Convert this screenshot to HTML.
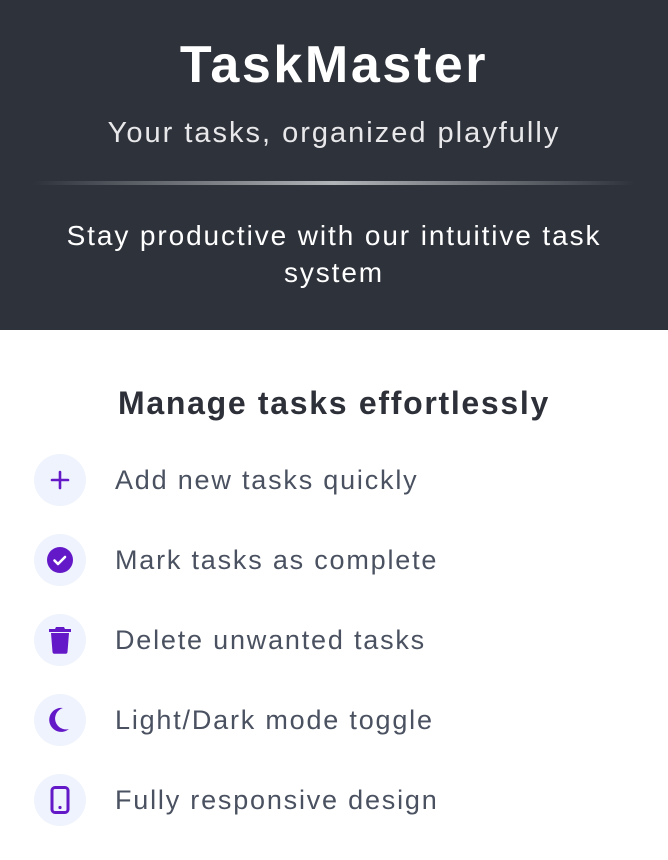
<!DOCTYPE html><html><head><style>
body{margin:0;width:668px;height:860px;overflow:hidden;background:#fff;font-family:"Liberation Sans",sans-serif}
header{background:#2e323b;height:330px;color:#fff;text-align:center;position:relative}
h1{margin:0;position:absolute;top:35px;width:100%;font-size:52px;font-weight:bold;letter-spacing:2.6px}
.sub{position:absolute;top:117px;width:100%;font-size:29px;letter-spacing:2px;color:#e8e8ea}
.line{position:absolute;top:181px;left:33px;width:602px;height:4px;background:linear-gradient(90deg,rgba(255,255,255,0),rgba(200,204,206,.85),rgba(255,255,255,0))}
.tag{position:absolute;top:217px;left:40px;right:40px;font-size:28px;line-height:37px;letter-spacing:1.9px}
h2{position:absolute;top:385px;width:100%;margin:0;text-align:center;font-size:32px;letter-spacing:1.7px;color:#2d3038}
.row{position:absolute;left:34px;height:52px;display:flex;align-items:center}
.ic{width:52px;height:52px;border-radius:50%;background:#eff3fd;display:flex;align-items:center;justify-content:center}
.row span{margin-left:29px;font-size:27px;letter-spacing:1.8px;color:#4a5160}
</style></head><body>
<header><h1>TaskMaster</h1><div class="sub">Your tasks, organized playfully</div><div class="line"></div>
<div class="tag">Stay productive with our intuitive task system</div></header>
<h2>Manage tasks effortlessly</h2>
<div class="row" style="top:454px"><div class="ic"><svg width="24" height="24" viewBox="0 0 24 24"><path d="M12 4v16M4 12h16" stroke="#6419c8" stroke-width="2.6" stroke-linecap="round"/></svg></div><span>Add new tasks quickly</span></div>
<div class="row" style="top:534px"><div class="ic"><svg width="28" height="28" viewBox="0 0 28 28"><circle cx="14" cy="14" r="13" fill="#6419c8"/><path d="M8.5 14.5l3.5 3.5 7-7" stroke="#fff" stroke-width="2.6" fill="none" stroke-linecap="round" stroke-linejoin="round"/></svg></div><span>Mark tasks as complete</span></div>
<div class="row" style="top:614px"><div class="ic"><svg width="24" height="28" viewBox="0 0 24 28"><path d="M8 1h8l1 2h6v3H1V3h6z M3 7h18l-1.5 19a2 2 0 0 1-2 1.8h-11a2 2 0 0 1-2-1.8z" fill="#6419c8"/></svg></div><span>Delete unwanted tasks</span></div>
<div class="row" style="top:694px"><div class="ic"><svg width="24" height="26" viewBox="0 0 24 26"><path d="M15 1a12 12 0 1 0 6 21A10 10 0 0 1 15 1z" fill="#6419c8"/></svg></div><span>Light/Dark mode toggle</span></div>
<div class="row" style="top:774px"><div class="ic"><svg width="20" height="28" viewBox="0 0 20 28"><rect x="2" y="1.5" width="16" height="25" rx="3" fill="none" stroke="#6419c8" stroke-width="3"/><circle cx="10" cy="21.5" r="1.6" fill="#6419c8"/></svg></div><span>Fully responsive design</span></div>
</body></html>
